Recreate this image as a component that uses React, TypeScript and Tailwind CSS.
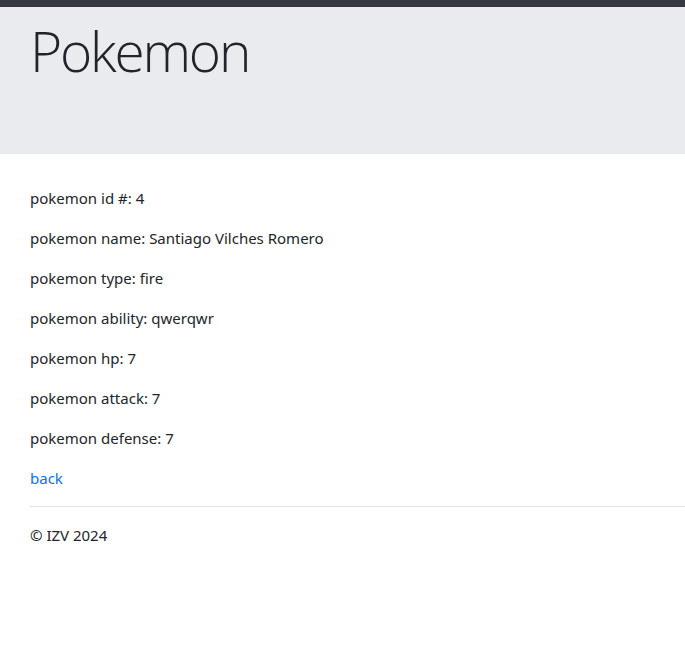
export default function App() {
  const rows = [
    "pokemon id #: 4",
    "pokemon name: Santiago Vilches Romero",
    "pokemon type: fire",
    "pokemon ability: qwerqwr",
    "pokemon hp: 7",
    "pokemon attack: 7",
    "pokemon defense: 7",
  ];
  return (
    <div className="min-h-[647px] bg-white text-[#212529] font-['Noto_Sans',sans-serif]">
      <div className="h-[7px] bg-[#343a40]" />
      <div className="h-[147px] bg-[#e9ebef] pl-[30px] pt-[11px]">
        <h1 className="text-[55px] leading-[1.2] font-light text-[#212529] font-['Open_Sans',sans-serif] tracking-[-2.2px]">
          Pokemon
        </h1>
      </div>
      <div className="pl-[30px] pt-[32px]">
        {rows.map((r) => (
          <p key={r} className="text-[15px] leading-[24px] mb-[16px]">
            {r}
          </p>
        ))}
        <a href="#" className="block text-[15px] leading-[24px] text-[#0d6efd]">
          back
        </a>
        <hr className="mt-[16px] border-0 border-t border-[#e3e3e3]" />
        <p className="mt-[16px] text-[15px] leading-[24px]">© IZV 2024</p>
      </div>
    </div>
  );
}
